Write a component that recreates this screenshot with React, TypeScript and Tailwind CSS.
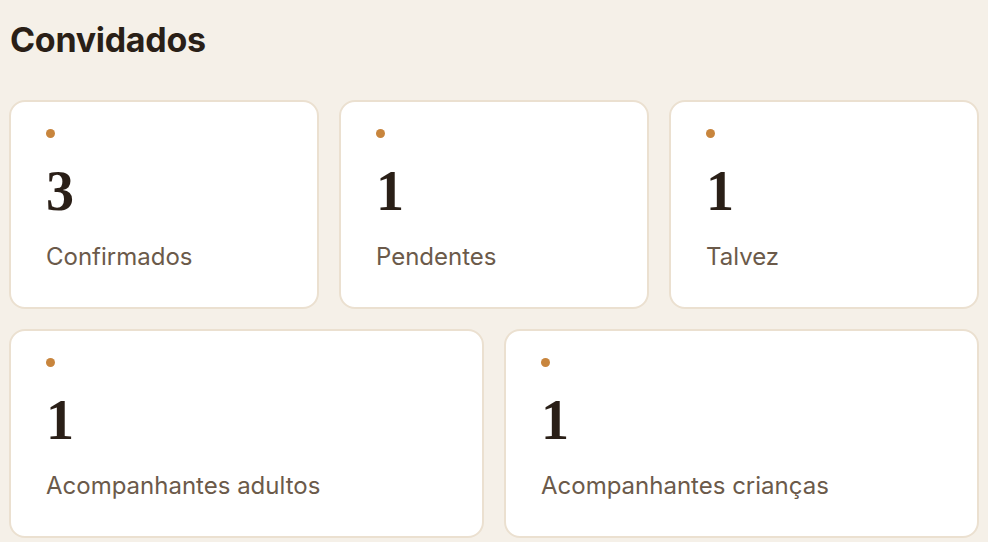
const top = [
  { value: 3, label: 'Confirmados' },
  { value: 1, label: 'Pendentes' },
  { value: 1, label: 'Talvez' },
];
const bottom = [
  { value: 1, label: 'Acompanhantes adultos' },
  { value: 1, label: 'Acompanhantes crianças' },
];

function StatCard({ value, label }: { value: number; label: string }) {
  return (
    <div className="rounded-[16px] border-2 border-[#ebe0d0] bg-white pl-[35px] pt-[27px] pb-[35px]">
      <div className="h-[9px] w-[9px] rounded-full bg-[#c8853d]" />
      <div className="mt-[25px] text-[56px] leading-none font-bold text-[#2a1f17] [font-family:'Liberation_Serif',serif]">
        {value}
      </div>
      <div className="mt-[23px] text-[24px] leading-[30px] text-[#6b5a4a] [font-family:Inter,sans-serif]">
        {label}
      </div>
    </div>
  );
}

export default function App() {
  return (
    <div className="min-h-[542px] bg-[#f5f0e8] px-[9px] pt-[20px] [font-family:Inter,sans-serif]">
      <h1 className="pl-[1px] text-[34px] leading-[40px] font-bold tracking-[-0.3px] text-[#2a1f17]">Convidados</h1>
      <div className="mt-[40px] grid grid-cols-3 gap-[20px]">
        {top.map((s) => <StatCard key={s.label} {...s} />)}
      </div>
      <div className="mt-[20px] grid grid-cols-2 gap-[20px]">
        {bottom.map((s) => <StatCard key={s.label} {...s} />)}
      </div>
    </div>
  );
}
